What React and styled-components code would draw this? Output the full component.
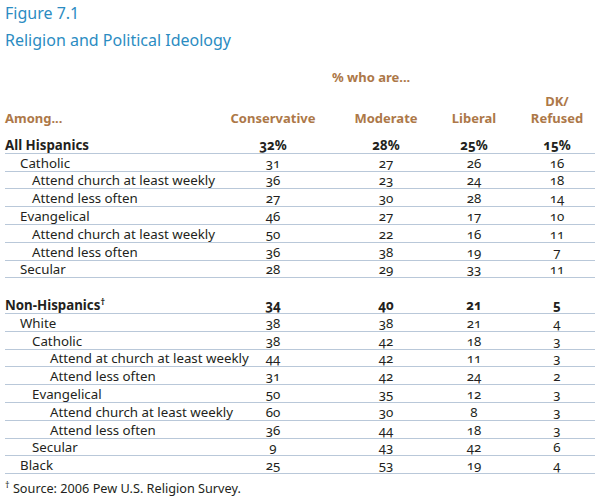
import React from 'react';
import styled, { createGlobalStyle } from 'styled-components';

const GlobalStyle = createGlobalStyle`
  body {
    margin: 0;
    background: #ffffff;
    font-family: 'Noto Sans', 'Liberation Sans', sans-serif;
    color: #231f20;
  }
`;

const Page = styled.div`
  width: 600px;
  height: 500px;
  padding: 2px 5px 0 5px;
  box-sizing: border-box;
  overflow: hidden;
`;

const FigureLabel = styled.div`
  color: #2b8cc2;
  font-size: 16px;
  line-height: 22px;
`;

const FigureTitle = styled.div`
  color: #2b8cc2;
  font-size: 16px;
  line-height: 22px;
  margin-top: 5px;
`;

const Caption = styled.div`
  color: #ad7848;
  font-weight: bold;
  font-size: 13px;
  line-height: 16px;
  margin: 18px 0 0 327px;
`;

const COLS = '198px 140px 86px 90px 76px';

const HeaderRow = styled.div`
  display: grid;
  grid-template-columns: ${COLS};
  align-items: end;
  height: 42px;
  margin-bottom: 9px;
  color: #ad7848;
  font-weight: bold;
  font-size: 13px;
  line-height: 17px;
`;

const HeadCell = styled.div`
  text-align: ${(p) => (p.left ? 'left' : 'center')};
  white-space: nowrap;
`;

const Row = styled.div`
  display: grid;
  grid-template-columns: ${COLS};
  align-items: end;
  height: 17.8px;
  box-sizing: border-box;
  border-bottom: ${(p) => (p.plain ? 'none' : '1px solid #b9c8d9')};
  font-size: 13.3px;
  font-weight: ${(p) => (p.bold ? 'bold' : 'normal')};
  font-variant-numeric: oldstyle-nums;
  line-height: 16px;
`;

const Label = styled.div`
  padding-left: ${(p) => p.indent}px;
  white-space: nowrap;
`;

const Value = styled.div`
  text-align: center;
`;

const Dagger = styled.sup`
  font-size: 9px;
  line-height: 0;
  vertical-align: 5px;
`;

const Source = styled.div`
  font-size: 12.7px;
  line-height: 16px;
  margin-top: 6px;
`;

const indents = [0, 15, 27, 45];

const hispanics = [
  { label: 'All Hispanics', level: 0, bold: true, v: ['32%', '28%', '25%', '15%'] },
  { label: 'Catholic', level: 1, v: ['31', '27', '26', '16'] },
  { label: 'Attend church at least weekly', level: 2, v: ['36', '23', '24', '18'] },
  { label: 'Attend less often', level: 2, v: ['27', '30', '28', '14'] },
  { label: 'Evangelical', level: 1, v: ['46', '27', '17', '10'] },
  { label: 'Attend church at least weekly', level: 2, v: ['50', '22', '16', '11'] },
  { label: 'Attend less often', level: 2, v: ['36', '38', '19', '7'] },
  { label: 'Secular', level: 1, v: ['28', '29', '33', '11'] },
];

const nonHispanics = [
  { label: 'Non-Hispanics', level: 0, bold: true, dagger: true, v: ['34', '40', '21', '5'] },
  { label: 'White', level: 1, v: ['38', '38', '21', '4'] },
  { label: 'Catholic', level: 2, v: ['38', '42', '18', '3'] },
  { label: 'Attend at church at least weekly', level: 3, v: ['44', '42', '11', '3'] },
  { label: 'Attend less often', level: 3, v: ['31', '42', '24', '2'] },
  { label: 'Evangelical', level: 2, v: ['50', '35', '12', '3'] },
  { label: 'Attend church at least weekly', level: 3, v: ['60', '30', '8', '3'] },
  { label: 'Attend less often', level: 3, v: ['36', '44', '18', '3'] },
  { label: 'Secular', level: 2, v: ['9', '43', '42', '6'] },
  { label: 'Black', level: 1, v: ['25', '53', '19', '4'] },
];

const DataRow = ({ row }) => (
  <Row bold={row.bold}>
    <Label indent={indents[row.level]}>
      {row.label}
      {row.dagger && <Dagger>†</Dagger>}
    </Label>
    {row.v.map((val, i) => (
      <Value key={i}>{val}</Value>
    ))}
  </Row>
);

const App = () => (
  <Page>
    <GlobalStyle />
    <FigureLabel>Figure 7.1</FigureLabel>
    <FigureTitle>Religion and Political Ideology</FigureTitle>
    <Caption>% who are...</Caption>
    <HeaderRow>
      <HeadCell left>Among...</HeadCell>
      <HeadCell>Conservative</HeadCell>
      <HeadCell>Moderate</HeadCell>
      <HeadCell>Liberal</HeadCell>
      <HeadCell>
        DK/
        <br />
        Refused
      </HeadCell>
    </HeaderRow>
    {hispanics.map((r, i) => (
      <DataRow key={i} row={r} />
    ))}
    <Row plain />
    {nonHispanics.map((r, i) => (
      <DataRow key={i} row={r} />
    ))}
    <Source>
      <Dagger>†</Dagger> Source: 2006 Pew U.S. Religion Survey.
    </Source>
  </Page>
);

export default App;
